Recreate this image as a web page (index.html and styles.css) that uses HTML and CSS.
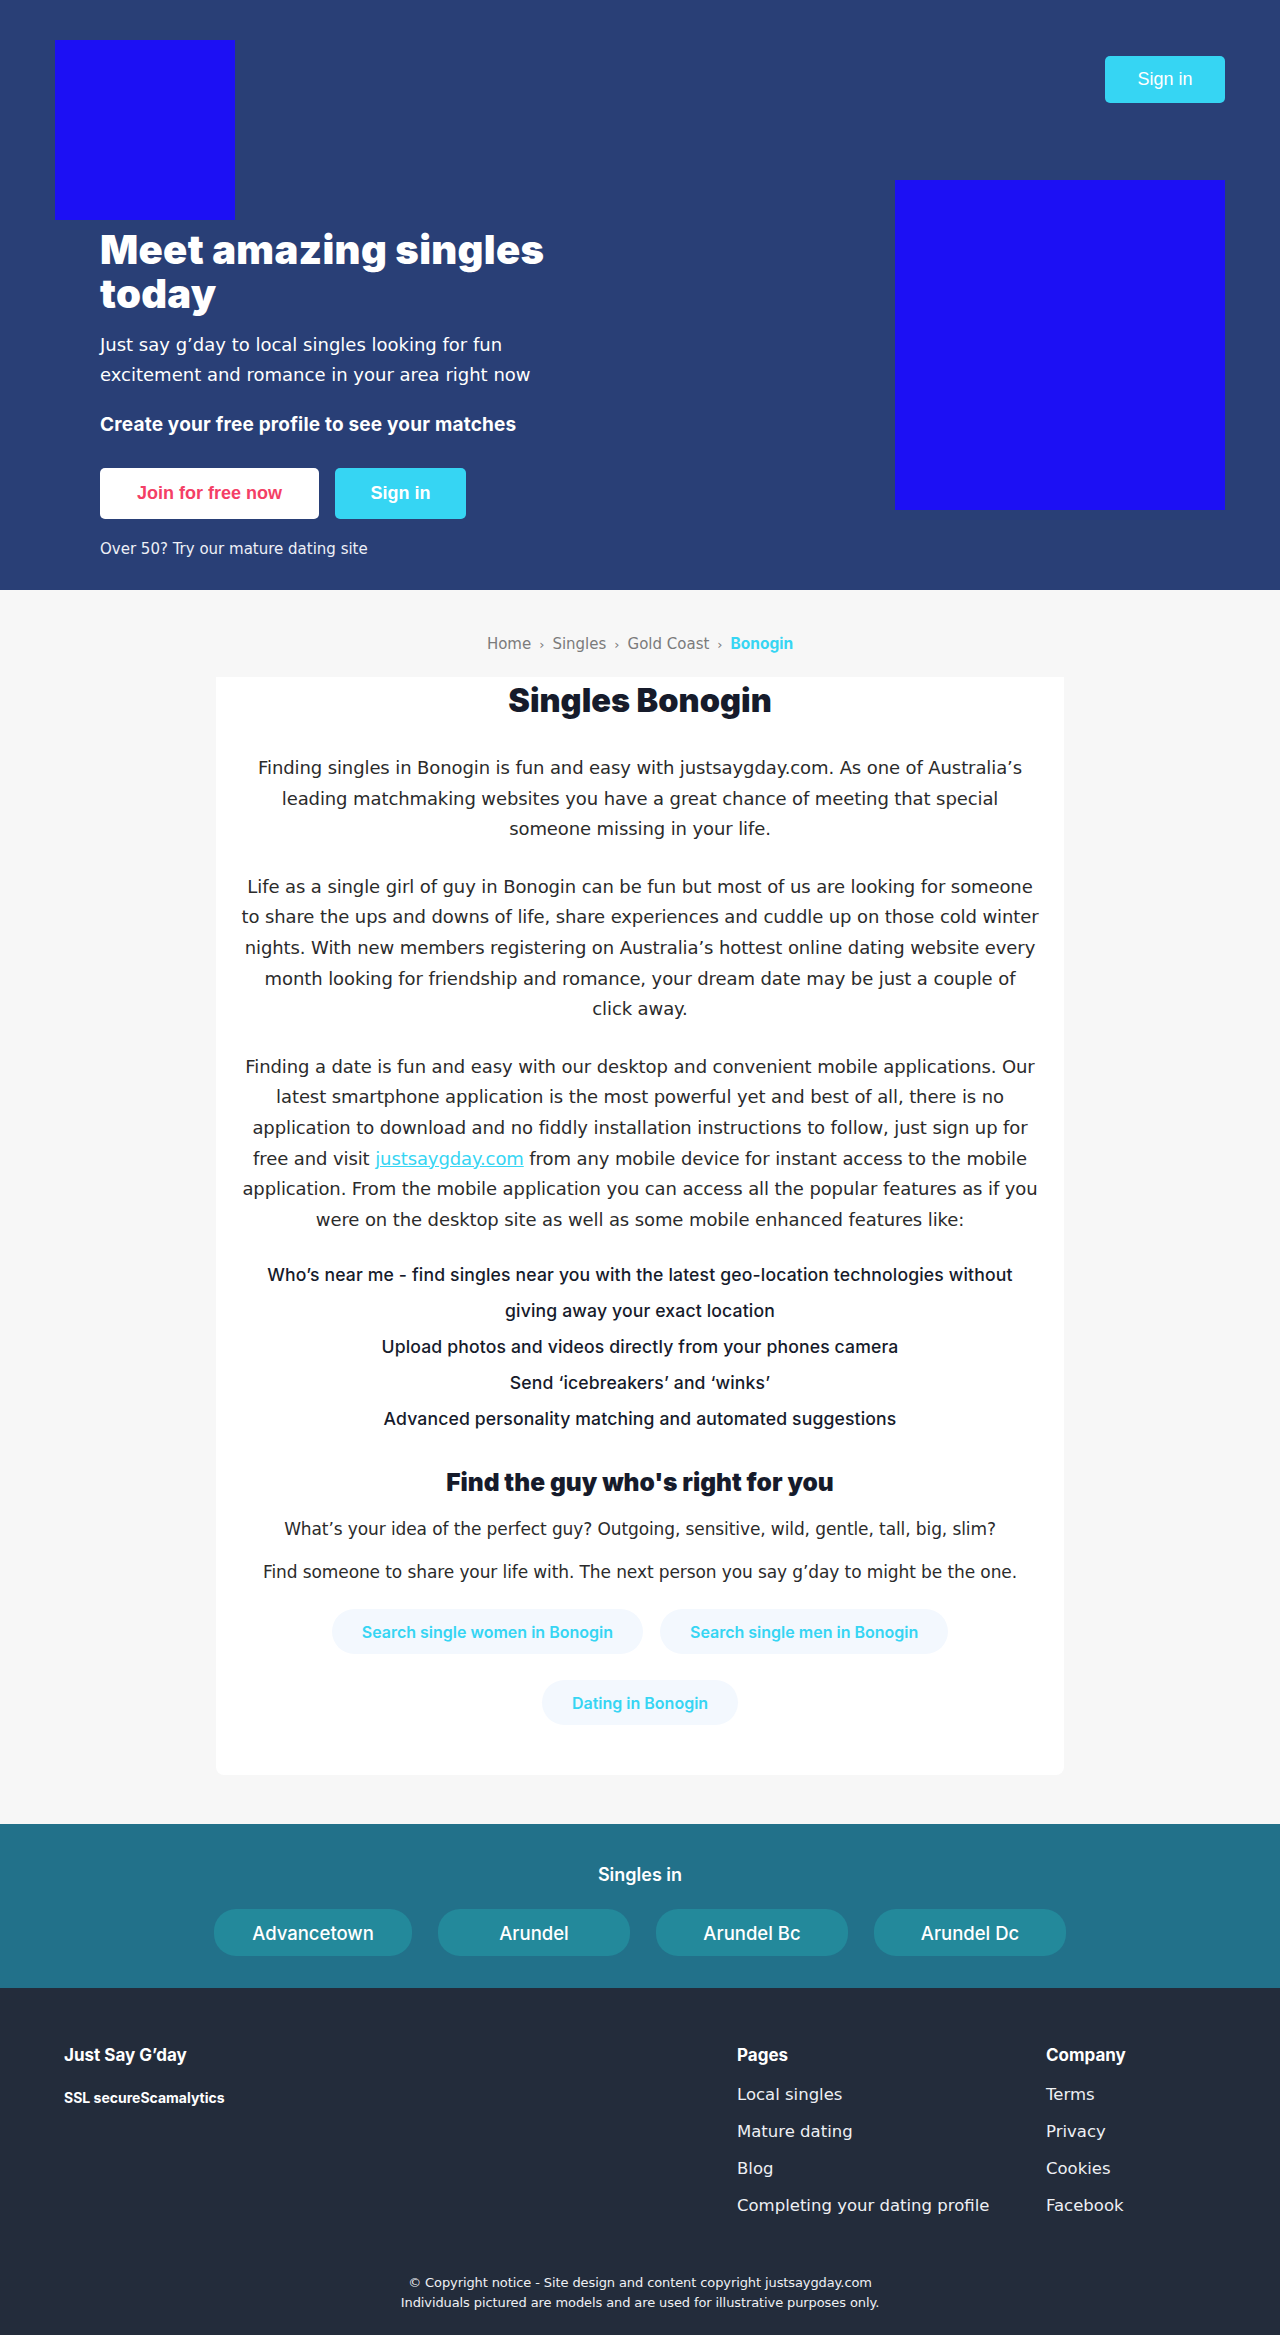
FILE: index.html
```html
<!DOCTYPE html>
<html lang="en">
<head>
<meta charset="utf-8">
<title>Singles Bonogin</title>
<link rel="stylesheet" href="styles.css">
</head>
<body>
<header class="hero">
  <div class="hero-inner">
    <div class="hero-top">
      <div class="logo"></div>
      <a class="btn-top" href="#">Sign in</a>
    </div>
    <div class="hero-body">
      <div class="hero-copy">
        <h1 class="hero-title">Meet amazing singles today</h1>
        <p class="hero-lead">Just say g’day to local singles looking for fun excitement and romance in your area right now</p>
        <p class="hero-cta">Create your free profile to see your matches</p>
        <div class="hero-buttons">
          <a class="btn btn-join" href="#">Join for free now</a>
          <a class="btn btn-sign" href="#">Sign in</a>
        </div>
        <p class="hero-mature">Over 50? Try our mature dating site</p>
      </div>
      <div class="hero-img"></div>
    </div>
  </div>
</header>

<main class="main">
  <nav class="crumbs">
    <a href="#">Home</a><span class="sep">›</span><a href="#">Singles</a><span class="sep">›</span><a href="#">Gold Coast</a><span class="sep">›</span><span class="current">Bonogin</span>
  </nav>
  <article class="card">
    <h2 class="card-title">Singles Bonogin</h2>
    <p class="text">Finding singles in Bonogin is fun and easy with justsaygday.com. As one of Australia’s leading matchmaking websites you have a great chance of meeting that special someone missing in your life.</p>
    <p class="text">Life as a single girl of guy in Bonogin can be fun but most of us are looking for someone to share the ups and downs of life, share experiences and cuddle up on those cold winter nights. With new members registering on Australia’s hottest online dating website every month looking for friendship and romance, your dream date may be just a couple of click&nbsp;away.</p>
    <p class="text">Finding a date is fun and easy with our desktop and convenient mobile applications. Our latest smartphone application is the most powerful yet and best of all, there is no application to download and no fiddly installation instructions to follow, just sign up for free and visit <a class="inline-link" href="#">justsaygday.com</a> from any mobile device for instant access to the mobile application. From the mobile application you can access all the popular features as if you were on the desktop site as well as some mobile enhanced features like:</p>
    <ul class="features">
      <li>Who’s near me - find singles near you with the latest geo-location technologies without giving away your exact location</li>
      <li>Upload photos and videos directly from your phones camera</li>
      <li>Send ‘icebreakers’ and ‘winks’</li>
      <li>Advanced personality matching and automated suggestions</li>
    </ul>
    <h3 class="card-sub">Find the guy who's right for you</h3>
    <p class="small">What’s your idea of the perfect guy? Outgoing, sensitive, wild, gentle, tall, big, slim?</p>
    <p class="small small-2">Find someone to share your life with. The next person you say g’day to might be the one.</p>
    <div class="links">
      <a class="pill-link" href="#">Search single women in Bonogin</a>
      <a class="pill-link" href="#">Search single men in Bonogin</a>
      <a class="pill-link" href="#">Dating in Bonogin</a>
    </div>
  </article>
</main>

<section class="near">
  <h4 class="near-title">Singles in</h4>
  <div class="near-list">
    <a class="near-pill" href="#">Advancetown</a>
    <a class="near-pill" href="#">Arundel</a>
    <a class="near-pill" href="#">Arundel Bc</a>
    <a class="near-pill" href="#">Arundel Dc</a>
  </div>
</section>

<footer class="footer">
  <div class="footer-grid">
    <div class="footer-brand">
      <div class="footer-head">Just Say G’day</div>
      <div class="footer-ssl">SSL secureScamalytics</div>
    </div>
    <div class="footer-col">
      <div class="footer-head">Pages</div>
      <a href="#">Local singles</a>
      <a href="#">Mature dating</a>
      <a href="#">Blog</a>
      <a href="#">Completing your dating profile</a>
    </div>
    <div class="footer-col">
      <div class="footer-head">Company</div>
      <a href="#">Terms</a>
      <a href="#">Privacy</a>
      <a href="#">Cookies</a>
      <a href="#">Facebook</a>
    </div>
  </div>
  <div class="copyright">
    <p>© Copyright notice - Site design and content copyright justsaygday.com</p>
    <p>Individuals pictured are models and are used for illustrative purposes only.</p>
  </div>
</footer>
</body>
</html>
```
FILE: styles.css
```css
* { box-sizing: border-box; }
body {
  margin: 0;
  font-family: "DejaVu Sans", "Noto Sans", sans-serif;
  color: #2b2b2b;
  background: #f7f7f7;
}
a { text-decoration: none; color: inherit; }
p, h1, h2, h3, h4, ul { margin: 0; }

/* HERO */
.hero {
  background: #293f76;
  padding: 40px 0 30px;
  color: #fff;
}
.hero-inner {
  width: 1170px;
  margin: 0 auto;
}
.hero-top {
  height: 140px;
  display: flex;
  justify-content: space-between;
  align-items: flex-start;
}
.logo {
  width: 180px;
  height: 180px;
  flex: none;
  background: #1c10f4;
}
.btn-top {
  margin-top: 16px;
  width: 120px;
  height: 47px;
  display: flex;
  align-items: center;
  justify-content: center;
  background: #36d5f3;
  border-radius: 5px;
  font-family: "Liberation Sans", Arial, sans-serif;
  font-size: 18px;
  color: #fff;
}
.hero-body {
  display: flex;
  justify-content: space-between;
  align-items: flex-start;
}
.hero-copy {
  width: 520px;
  padding: 48px 0 0 45px;
}
.hero-title {
  font-family: Inter, "Noto Sans", sans-serif;
  font-weight: 900;
  font-size: 40px;
  line-height: 44px;
  letter-spacing: 0.3px;
}
.hero-lead {
  margin-top: 14px;
  width: 445px;
  font-size: 18px;
  line-height: 30px;
  letter-spacing: 0;
}
.hero-cta {
  margin-top: 21px;
  font-family: Inter, "Noto Sans", sans-serif;
  font-weight: 700;
  font-size: 19px;
  line-height: 28px;
  letter-spacing: 0.2px;
}
.hero-buttons {
  margin-top: 29px;
  display: flex;
  gap: 16px;
}
.btn {
  height: 51px;
  display: flex;
  align-items: center;
  justify-content: center;
  border-radius: 5px;
  font-family: "Liberation Sans", Arial, sans-serif;
  font-weight: 700;
  font-size: 18px;
}
.btn-join { width: 219px; background: #fff; color: #f43f66; }
.btn-sign { width: 131px; background: #36d5f3; color: #fff; }
.hero-mature {
  margin-top: 19px;
  font-size: 15px;
  line-height: 22px;
  letter-spacing: 0;
  color: #eef0f6;
}
.hero-img {
  width: 330px;
  height: 330px;
  flex: none;
  background: #1c10f4;
}

/* MAIN */
.main {
  background: #f7f7f7;
  padding: 0 0 49px;
}
.crumbs {
  padding: 42px 0 20px;
  text-align: center;
  font-size: 15px;
  line-height: 24px;
  color: #7b7b7b;
}
.crumbs .sep { margin: 0 8px; font-size: 13px; }
.crumbs .current {
  color: #36d5f3;
  font-family: Inter, "Noto Sans", sans-serif;
  font-weight: 700;
  font-size: 15.5px;
}
.card {
  width: 848px;
  margin: 0 auto;
  background: #fff;
  border-radius: 0 0 8px 8px;
  padding: 4px 24px 50px;
  text-align: center;
}
.card-title {
  font-family: Inter, "Noto Sans", sans-serif;
  font-weight: 900;
  font-size: 32.5px;
  line-height: 40px;
  color: #161b2b;
}
.text {
  font-size: 18px;
  line-height: 30.6px;
  letter-spacing: -0.1px;
  color: #2b2b2b;
  margin-top: 27px;
}
.card-title + .text { margin-top: 32px; }
.inline-link { color: #36d5f3; text-decoration: underline; }
.features {
  list-style: none;
  padding: 0;
  margin-top: 22px;
  font-family: Inter, "Noto Sans", sans-serif;
  font-weight: 500;
  font-size: 17.6px;
  line-height: 36px;
  letter-spacing: 0.15px;
  color: #161b2b;
}
.card-sub {
  margin-top: 29px;
  font-family: Inter, "Noto Sans", sans-serif;
  font-weight: 900;
  font-size: 24.5px;
  line-height: 32px;
  color: #161b2b;
}
.small {
  margin-top: 17px;
  font-size: 17px;
  line-height: 28px;
  letter-spacing: -0.1px;
  color: #2b2b2b;
}
.small-2 { margin-top: 15px; }
.links {
  margin: 23px auto 0;
  width: 660px;
  display: flex;
  flex-wrap: wrap;
  justify-content: center;
  column-gap: 17px;
  row-gap: 26px;
}
.pill-link {
  height: 45px;
  padding: 0 30px;
  display: flex;
  align-items: center;
  border-radius: 23px;
  background: #f3f8fe;
  color: #36d5f3;
  font-family: Inter, "Noto Sans", sans-serif;
  font-weight: 600;
  font-size: 16px;
}

/* NEAR */
.near {
  background: #22718a;
  padding: 39px 0 32px;
  text-align: center;
  color: #fff;
}
.near-title {
  font-family: Inter, "Noto Sans", sans-serif;
  font-weight: 600;
  font-size: 18px;
  line-height: 24px;
}
.near-list {
  width: 852px;
  margin: 22px auto 0;
  display: grid;
  grid-template-columns: 198px 1fr 1fr 1fr;
  column-gap: 26px;
}
.near-pill {
  height: 47px;
  display: flex;
  align-items: center;
  justify-content: center;
  border-radius: 22px;
  background: #23899b;
  font-family: Inter, "Noto Sans", sans-serif;
  font-weight: 500;
  font-size: 18.5px;
  color: #fff;
}

/* FOOTER */
.footer {
  background: #232c3b;
  color: #fff;
  padding: 55px 64px 22px;
}
.footer-grid {
  display: grid;
  grid-template-columns: 1fr 309px 170px;
}
.footer-head {
  font-family: Inter, "Noto Sans", sans-serif;
  font-weight: 700;
  font-size: 17px;
  line-height: 24px;
}
.footer-ssl {
  margin-top: 21px;
  font-family: Inter, "Noto Sans", sans-serif;
  font-weight: 700;
  font-size: 14px;
  line-height: 20px;
}
.footer-col {
  display: flex;
  flex-direction: column;
  align-items: flex-start;
}
.footer-col a {
  margin-top: 13px;
  font-size: 16.5px;
  line-height: 24px;
  letter-spacing: 0;
  color: #eef0f4;
}
.footer-col .footer-head + a { margin-top: 16px; }
.copyright {
  margin-top: 55px;
  text-align: center;
  font-size: 13px;
  line-height: 20px;
  letter-spacing: -0.1px;
  color: #eef0f4;
}
```
